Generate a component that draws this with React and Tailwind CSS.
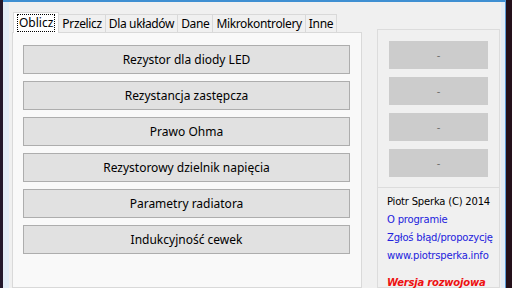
import { useState } from "react";

const tabs = ["Oblicz", "Przelicz", "Dla układów", "Dane", "Mikrokontrolery", "Inne"];

const calculators = [
  "Rezystor dla diody LED",
  "Rezystancja zastępcza",
  "Prawo Ohma",
  "Rezystorowy dzielnik napięcia",
  "Parametry radiatora",
  "Indukcyjność cewek",
];

export default function App() {
  const [active, setActive] = useState(0);

  return (
    <div className="flex h-[288px] w-[512px] overflow-hidden bg-[#1a1020] font-['Noto_Sans',sans-serif] text-[12px] text-black">
      {/* window frame, left */}
      <div className="w-[3px] bg-[#24182c]" />
      <div className="w-[6px] border-t-2 border-[#3f8fd2] bg-[#e2ecf6]" />

      {/* client area */}
      <div className="flex flex-1 gap-[15px] border-t-2 border-[#3f8fd2] bg-[#f0f0f0] pl-[3px] pt-[10px]">
        {/* tab control */}
        <div className="flex w-[350px] flex-col">
          <div className="flex items-end whitespace-nowrap pl-[1px]">
            {tabs.map((t, i) =>
              i === active ? (
                <button
                  key={t}
                  onClick={() => setActive(i)}
                  className="relative z-10 -mb-px h-[21px] shrink-0 border border-b-0 border-[#d9d9d9] bg-[#ffffff] px-[3px] leading-none"
                >
                  <span className="block border border-dotted border-black px-[1px] py-[2px]">{t}</span>
                </button>
              ) : (
                <button
                  key={t}
                  onClick={() => setActive(i)}
                  className="-ml-px h-[18px] shrink-0 border border-b-0 border-[#d9d9d9] bg-[#f0f0f0] px-[3px] pt-[1px] leading-none tracking-[-0.35px]"
                >
                  {t}
                </button>
              )
            )}
          </div>
          <div className="flex flex-1 flex-col gap-[7px] border border-[#d9d9d9] bg-[#f9f9f9] pl-[10px] pr-[11px] pt-[12px]">
            {calculators.map((c) => (
              <button
                key={c}
                className="h-[29px] border border-[#adadad] bg-[#e1e1e1] text-[12px] leading-none"
              >
                {c}
              </button>
            ))}
          </div>
        </div>

        {/* side group box */}
        <div className="mt-[17px] flex w-[123px] flex-col border border-[#dcdcdc] font-['DejaVu_Sans',sans-serif] text-[10px]">
          <div className="flex flex-col gap-[8px] px-[11px] pt-[11px]">
            {[0, 1, 2, 3].map((n) => (
              <div
                key={n}
                className="flex h-[28px] items-center justify-center bg-[#cccccc] text-[#6d6d6d]"
              >
                -
              </div>
            ))}
          </div>
          <div className="mt-[10px] border-t border-[#dcdcdc]" />
          <div className="flex flex-col pl-[9px] pt-[5px] leading-[18px] tracking-[-0.2px]">
            <span>Piotr Sperka (C) 2014</span>
            <span className="text-[#2222dd]">O programie</span>
            <span className="text-[#2222dd]">Zgłoś błąd/propozycję</span>
            <span className="text-[#2222dd]">www.piotrsperka.info</span>
            <span className="mt-[9px] font-bold italic text-[#ee1111]">Wersja rozwojowa</span>
          </div>
        </div>
      </div>

      {/* window frame, right */}
      <div className="w-[4px] border-t-2 border-[#3f8fd2] bg-[#e2ecf6]" />
      <div className="w-[1px] bg-[#5a9ad6]" />
      <div className="w-[6px] bg-[#24101a]" />
    </div>
  );
}
